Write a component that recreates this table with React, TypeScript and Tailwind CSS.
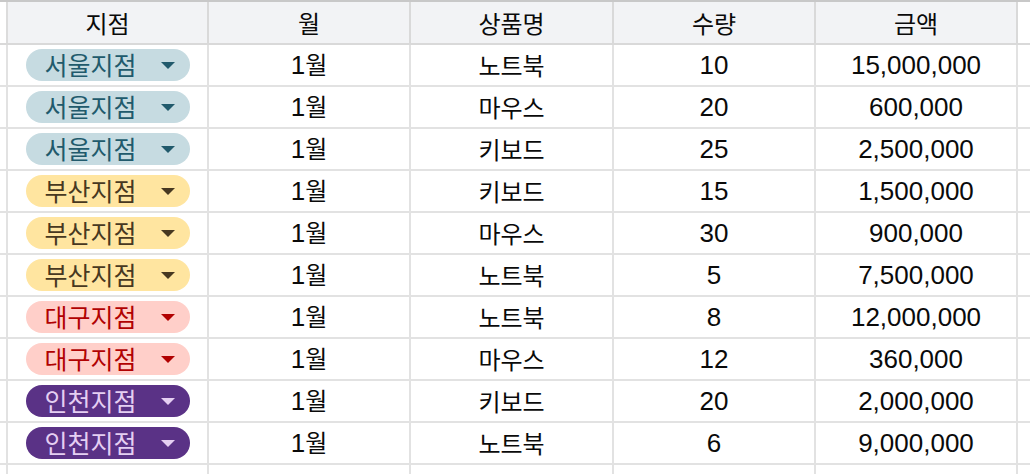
import React from "react";

type Branch = "서울" | "부산" | "대구" | "인천";

const chip: Record<Branch, { bg: string; fg: string; tri: string }> = {
  서울: { bg: "bg-[#c6dbe1]", fg: "text-[#215a6c]", tri: "border-t-[#215a6c]" },
  부산: { bg: "bg-[#ffe5a0]", fg: "text-[#473821]", tri: "border-t-[#473821]" },
  대구: { bg: "bg-[#ffcfc9]", fg: "text-[#b10202]", tri: "border-t-[#b10202]" },
  인천: { bg: "bg-[#5a3286]", fg: "text-[#e5cff2]", tri: "border-t-[#e5cff2]" },
};

const rows: [Branch, string, string, string, string][] = [
  ["서울", "1월", "노트북", "10", "15,000,000"],
  ["서울", "1월", "마우스", "20", "600,000"],
  ["서울", "1월", "키보드", "25", "2,500,000"],
  ["부산", "1월", "키보드", "15", "1,500,000"],
  ["부산", "1월", "마우스", "30", "900,000"],
  ["부산", "1월", "노트북", "5", "7,500,000"],
  ["대구", "1월", "노트북", "8", "12,000,000"],
  ["대구", "1월", "마우스", "12", "360,000"],
  ["인천", "1월", "키보드", "20", "2,000,000"],
  ["인천", "1월", "노트북", "6", "9,000,000"],
];

function Txt({ s }: { s: string }) {
  const parts = s.match(/[\uac00-\ud7a3]+|[^\uac00-\ud7a3]+/g) || [];
  return (
    <span className="inline-flex items-baseline">
      {parts.map((p, i) =>
        /[\uac00-\ud7a3]/.test(p) ? (
          <span
            key={i}
            className="text-[24px] font-['Noto_Sans_CJK_KR',sans-serif] leading-none"
          >
            {p}
          </span>
        ) : (
          <span
            key={i}
            className="text-[26px] font-['Liberation_Sans','Noto_Sans_CJK_KR',sans-serif] leading-none"
          >
            {p}
          </span>
        )
      )}
    </span>
  );
}

const widths = ["w-[8px]", "w-[201px]", "w-[202px]", "w-[203px]", "w-[202px]", "w-[202px]"];

function Chip({ b }: { b: Branch }) {
  const c = chip[b];
  return (
    <div
      className={`flex h-[32px] w-[164px] items-center justify-between rounded-full pl-[19px] pr-[15px] ${c.bg} ${c.fg}`}
    >
      <span className="text-[25px] leading-none font-['Noto_Sans_CJK_KR',sans-serif] mt-[-1px]">
        {b}지점
      </span>
      <span
        className={`h-0 w-0 border-l-[7px] border-r-[7px] border-t-[7px] border-l-transparent border-r-transparent ${c.tri}`}
      />
    </div>
  );
}

export default function App() {
  const header = ["지점", "월", "상품명", "수량", "금액"];
  return (
    <div className="h-[474px] w-[1030px] overflow-hidden bg-white text-[#0a0a0a]">
      <div className="flex h-[45px] border-t-2 border-b-2 border-t-[#c8c8c8] border-b-[#d9d9d9]">
        <div className={`${widths[0]} border-r-2 border-[#dcdcdc]`} />
        {header.map((h, i) => (
          <div
            key={h}
            className={`${widths[i + 1]} flex items-center justify-center border-r-2 border-[#d9d9d9] bg-[#f2f3f5]`}
          >
            <Txt s={h} />
          </div>
        ))}
        <div className="flex-1" />
      </div>
      {rows.map((r, ri) => (
        <div key={ri} className="flex h-[42px] border-b-2 border-[#e2e2e2]">
          <div className={`${widths[0]} border-r-2 border-[#e2e2e2]`} />
          <div className={`${widths[1]} flex items-center justify-center border-r-2 border-[#e2e2e2]`}>
            <Chip b={r[0]} />
          </div>
          {r.slice(1).map((v, ci) => (
            <div
              key={ci}
              className={`${widths[ci + 2]} flex items-center justify-center border-r-2 border-[#e2e2e2]`}
            >
              <Txt s={v} />
            </div>
          ))}
          <div className="flex-1" />
        </div>
      ))}
      <div className="flex h-[20px]">
        {widths.map((w, i) => (
          <div key={i} className={`${w} border-r-2 border-[#e2e2e2]`} />
        ))}
      </div>
    </div>
  );
}
